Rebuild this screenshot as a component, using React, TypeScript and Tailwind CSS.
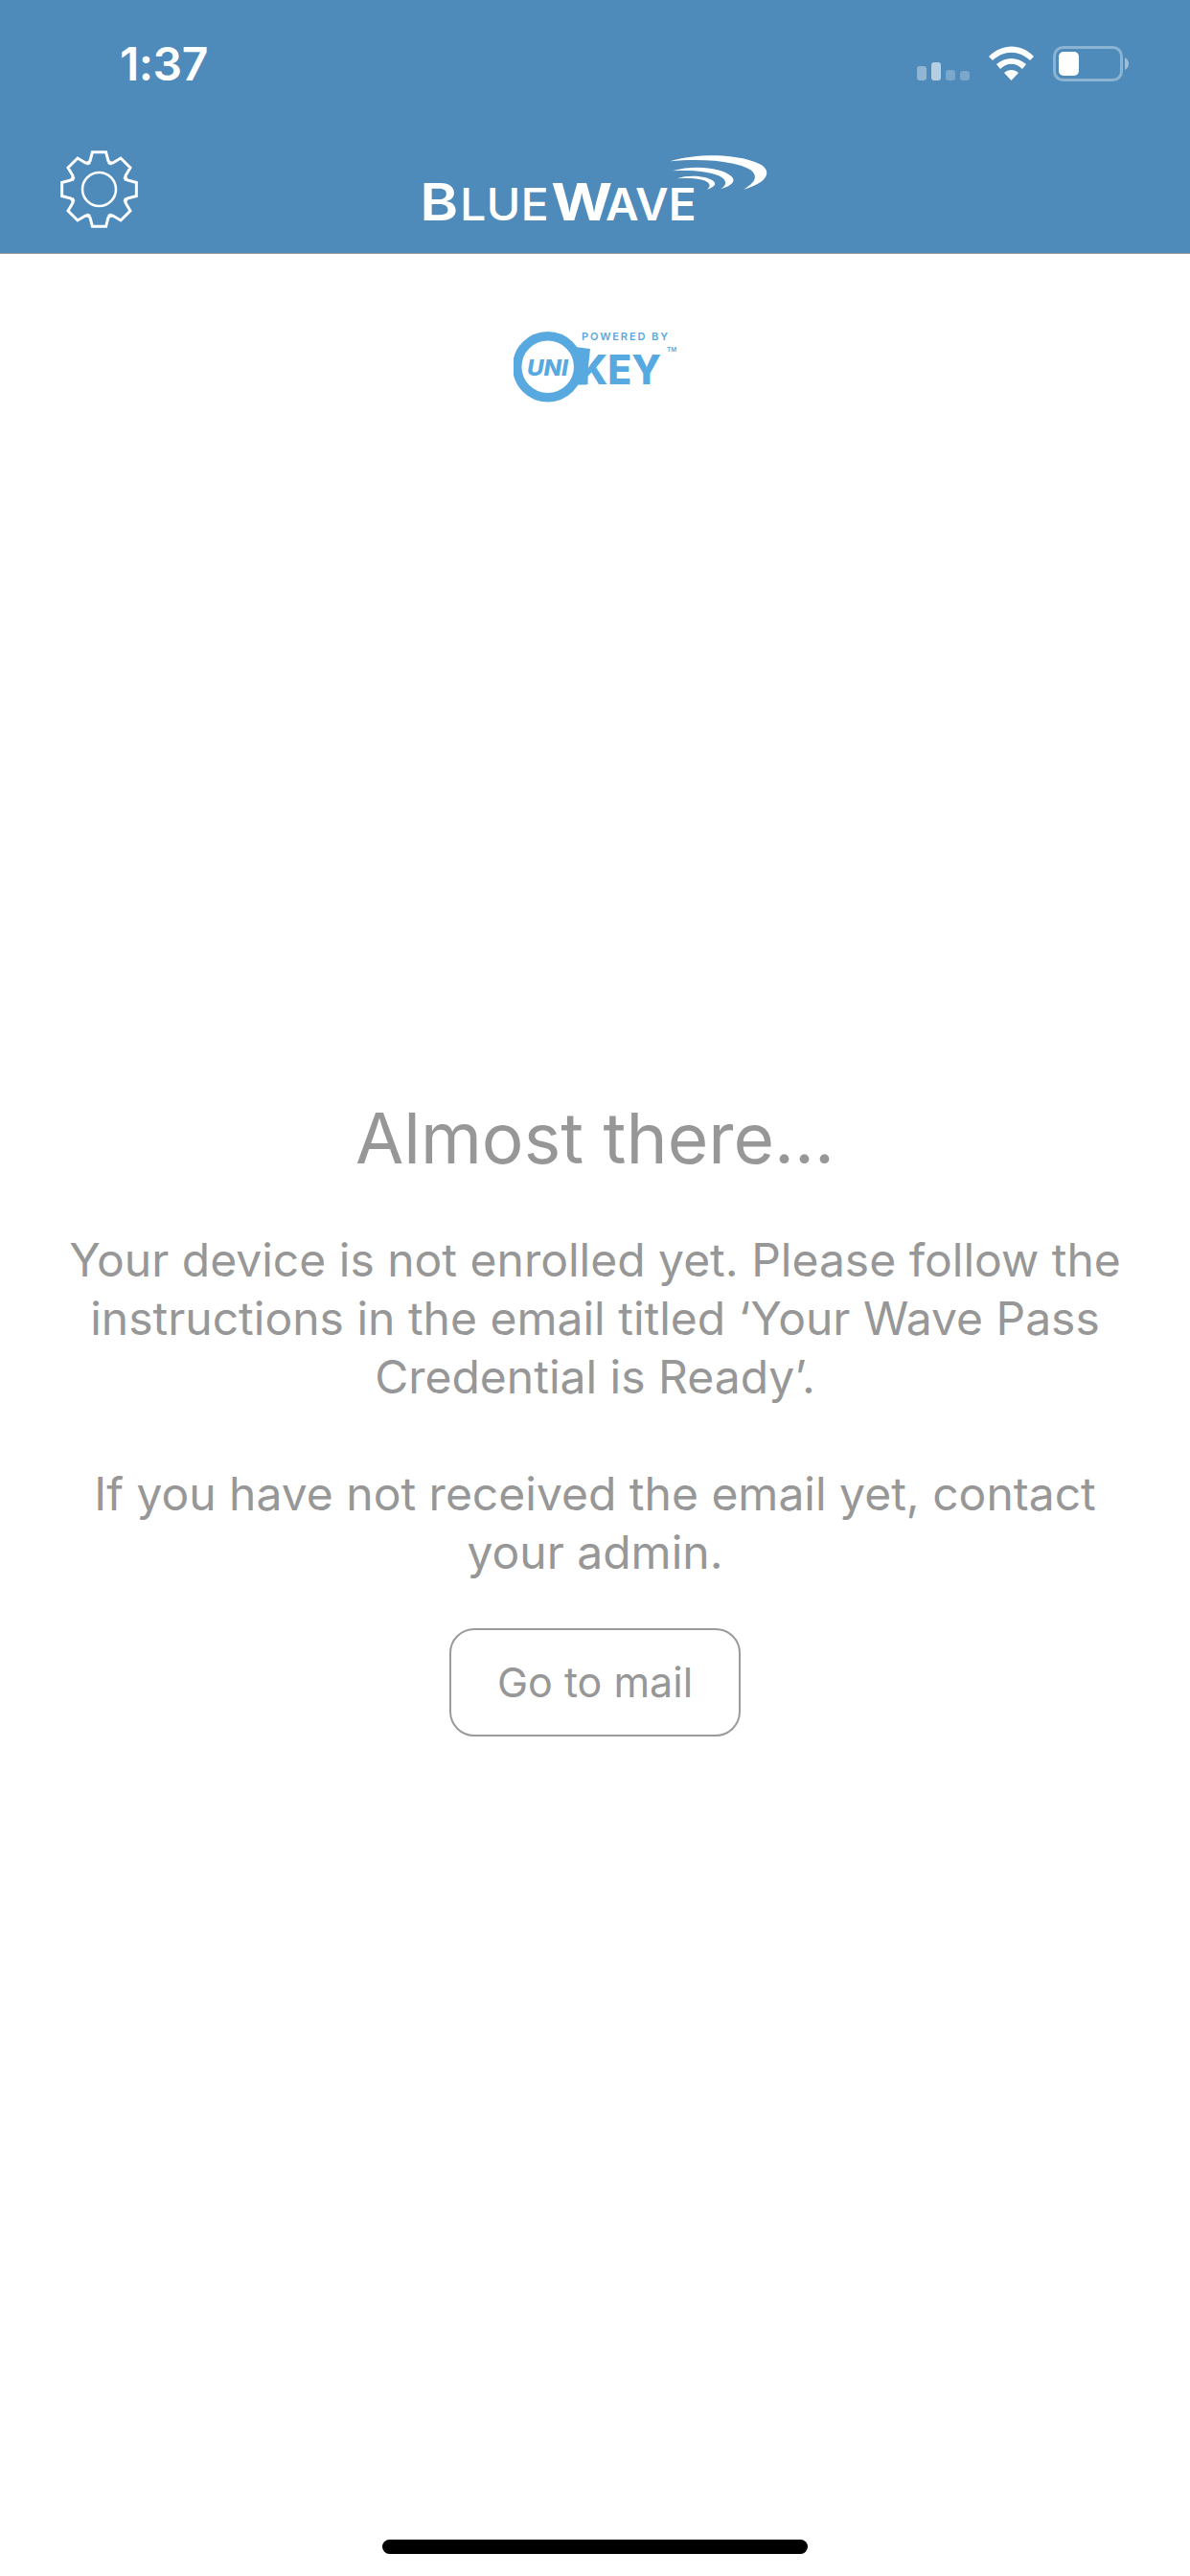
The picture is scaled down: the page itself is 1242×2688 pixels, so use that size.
import React from "react";

const font = { fontFamily: "Inter, 'Liberation Sans', sans-serif" };

function gearPath() {
  const cx = 40.5, cy = 40.5;
  const pts: string[] = [];
  for (let i = 0; i < 8; i++) {
    const a = (i * Math.PI) / 4 - Math.PI / 2;
    const spec: [number, number][] = [
      [-0.46, 29.5],
      [-0.31, 31],
      [-0.18, 39.5],
      [0.18, 39.5],
      [0.31, 31],
      [0.46, 29.5],
    ];
    for (const [d, r] of spec) {
      const t = a + d;
      pts.push(`${(cx + r * Math.cos(t)).toFixed(2)},${(cy + r * Math.sin(t)).toFixed(2)}`);
    }
  }
  return pts.join(" ");
}

function Gear() {
  return (
    <svg width="81" height="81" viewBox="0 0 81 81" fill="none" stroke="#fff" strokeWidth="3">
      <polygon points={gearPath()} strokeLinejoin="miter" />
      <circle cx="40.5" cy="40.5" r="17.5" strokeWidth="2.6" />
    </svg>
  );
}

function StatusIcons() {
  return (
    <svg width="222" height="38" viewBox="957 49 222 38" fill="none">
      <rect x="957" y="70" width="10" height="15" rx="3" fill="#fff" fillOpacity="0.38" />
      <rect x="972" y="66" width="10" height="19" rx="3" fill="#fff" fillOpacity="0.58" />
      <rect x="987" y="74" width="10" height="11" rx="3" fill="#fff" fillOpacity="0.25" />
      <rect x="1002" y="75" width="10" height="10" rx="3" fill="#fff" fillOpacity="0.25" />
      <path d="M1032 60 C1046 46 1066 46 1079 60 L1075 64 C1063 53 1048 53 1036 64 Z" fill="#fff" />
      <path d="M1040 68 C1049 60 1062 60 1071 68 L1067 73 C1060 66 1051 66 1044 73 Z" fill="#fff" />
      <path d="M1048 77 C1052 73 1059 73 1063 77 L1055.5 85 Z" fill="#fff" />
      <rect x="1100.5" y="50.5" width="70" height="34" rx="9" stroke="#fff" strokeOpacity="0.35" strokeWidth="3" />
      <rect x="1105" y="55" width="21" height="25" rx="5" fill="#fff" />
      <path d="M1174 61 C1177 63 1178 65 1178 67.5 C1178 70 1177 72 1174 74 Z" fill="#fff" fillOpacity="0.45" />
    </svg>
  );
}

function BlueWaveLogo() {
  const ff = "Inter, 'Liberation Sans', sans-serif";
  return (
    <svg width="400" height="104" viewBox="63 48 1200 312" fill="none">
      <text x="115" y="304" fill="#fff" fontFamily={ff} fontWeight="600" fontSize="160" textLength="120" lengthAdjust="spacingAndGlyphs">B</text>
      <text x="240" y="304" fill="#fff" fontFamily={ff} fontWeight="500" fontSize="138" textLength="278" lengthAdjust="spacingAndGlyphs">LUE</text>
      <text x="526" y="304" fill="#fff" fontFamily={ff} fontWeight="700" fontSize="162" textLength="192" lengthAdjust="spacingAndGlyphs">W</text>
      <text x="696" y="304" fill="#fff" fontFamily={ff} fontWeight="600" fontSize="138" textLength="284" lengthAdjust="spacingAndGlyphs">AVE</text>
      <path d="M898 118 C1000 88 1130 98 1185 130 C1220 155 1195 188 1128 206 C1165 185 1175 165 1150 145 C1100 115 990 108 898 118 Z" fill="#fff" />
      <path d="M906 148 C975 128 1060 138 1090 165 C1108 182 1085 197 1056 205 C1080 190 1075 175 1050 163 C1010 147 960 145 906 148 Z" fill="#fff" />
      <path d="M920 172 C960 158 1020 165 1036 182 C1045 192 1030 200 1014 206 C1028 195 1022 185 1005 178 C980 170 950 170 920 172 Z" fill="#fff" />
    </svg>
  );
}

function UniKeyLogo() {
  const c = "#57a9e0";
  const ff = "Inter, sans-serif";
  return (
    <svg width="172" height="80" viewBox="0 0 172 80" fill="none">
      <text x="71" y="13" fill={c} fontFamily={ff} fontWeight="600" fontSize="11" textLength="90" lengthAdjust="spacing">POWERED BY</text>
      <circle cx="35.7" cy="40.7" r="32" stroke={c} strokeWidth="9.5" />
      <text x="14" y="49.5" fill={c} fontFamily={ff} fontWeight="800" fontStyle="italic" fontSize="23" textLength="43" lengthAdjust="spacingAndGlyphs">UNI</text>
      <path d="M64 20 L80 22 L76 59.5 L66 59.5 Z" fill={c} />
      <text x="68" y="58.7" fill={c} fontFamily={ff} fontWeight="800" fontSize="42" textLength="86" lengthAdjust="spacingAndGlyphs">KEY</text>
      <text x="160" y="25" fill={c} fontFamily={ff} fontWeight="600" fontSize="6.5" textLength="10" lengthAdjust="spacingAndGlyphs">TM</text>
    </svg>
  );
}

export default function App() {
  return (
    <div className="flex h-[2688px] w-[1242px] flex-col bg-white" style={font}>
      <header className="h-[265px] border-b border-[#9a9a9a] bg-[#4e8aba]">
        <div className="flex h-[130px] items-center justify-between pt-[4px] pr-[63px] pl-[125px]">
          <span className="text-[48px] leading-none font-semibold tracking-[-0.5px] text-white">1:37</span>
          <StatusIcons />
        </div>
        <nav className="flex h-[134px] items-center justify-between px-[63px]">
          <Gear />
          <BlueWaveLogo />
          <div className="w-[81px]" />
        </nav>
      </header>

      <main className="flex flex-1 flex-col items-center">
        <div className="mt-[77px] pl-[1px]">
          <UniKeyLogo />
        </div>
        <h1 className="mt-[719px] text-[73px] leading-[94px] font-normal text-[#979797]">Almost there...</h1>
        <div className="mt-[49px] text-center text-[48px] leading-[61px] text-[#979797]">
          <p>
            Your device is not enrolled yet. Please follow the
            <br />
            instructions in the email titled ‘Your Wave Pass
            <br />
            Credential is Ready’.
          </p>
          <p className="mt-[61px]">
            If you have not received the email yet, contact
            <br />
            your admin.
          </p>
        </div>
        <button className="mt-[49px] flex h-[113px] w-[304px] items-center justify-center rounded-[26px] border-2 border-[#9b9b9b] text-[43px] text-[#979797]">
          Go to mail
        </button>
        <div className="mt-auto mb-[23px] h-[15px] w-[444px] rounded-full bg-black" />
      </main>
    </div>
  );
}
